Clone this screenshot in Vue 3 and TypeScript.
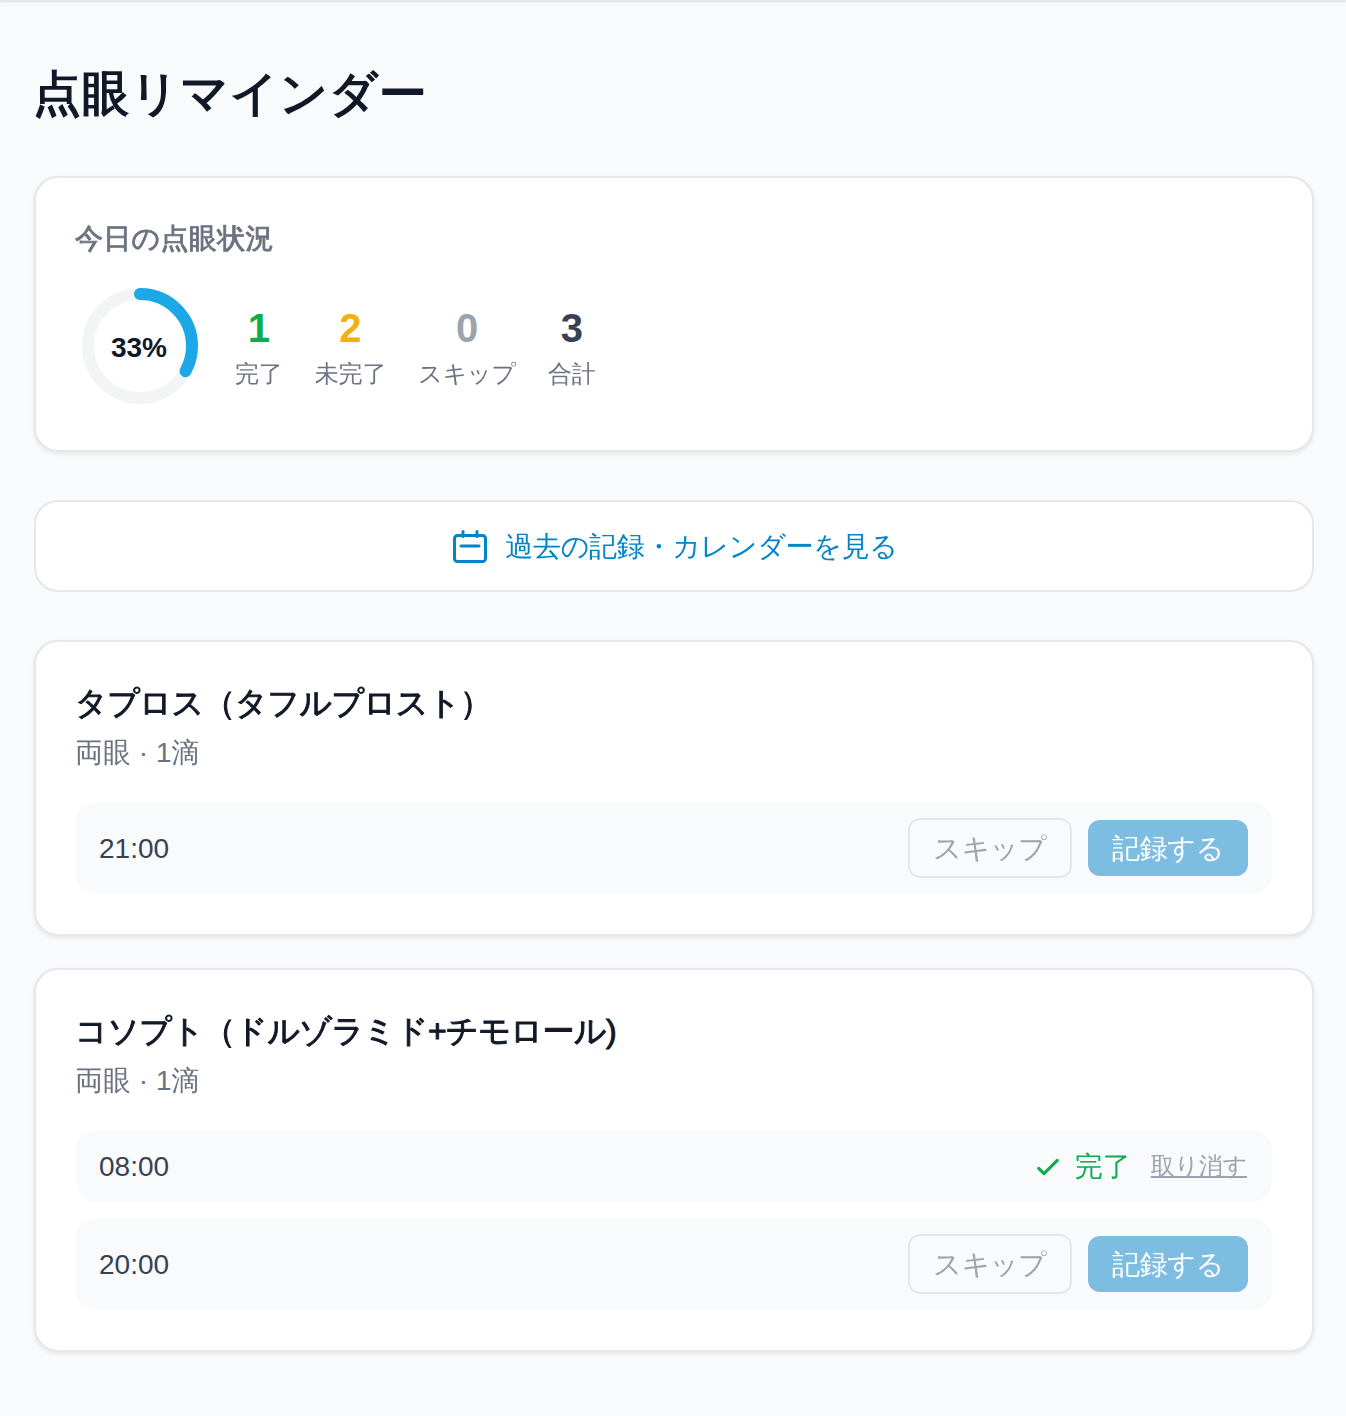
<script setup lang="ts">
interface Stat { value: number; label: string; color: string }
interface Slot { time: string; done: boolean }
interface Drug { name: string; detail: string; slots: Slot[] }

const stats: Stat[] = [
  { value: 1, label: '完了', color: '#10ac4c' },
  { value: 2, label: '未完了', color: '#f2b10f' },
  { value: 0, label: 'スキップ', color: '#9ca3af' },
  { value: 3, label: '合計', color: '#374151' },
]

const drugs: Drug[] = [
  { name: 'タプロス（タフルプロスト）', detail: '両眼 · 1滴', slots: [{ time: '21:00', done: false }] },
  {
    name: 'コソプト（ドルゾラミド+チモロール)',
    detail: '両眼 · 1滴',
    slots: [
      { time: '08:00', done: true },
      { time: '20:00', done: false },
    ],
  },
]

const radius = 52
const circumference = 2 * Math.PI * radius
const dash = `${circumference * 0.33} ${circumference}`
</script>

<template>
  <div class="page">
    <div class="topline"></div>
    <main class="content">
      <h1 class="title">点眼リマインダー</h1>

      <section class="card summary">
        <h2 class="summary-title">今日の点眼状況</h2>
        <div class="summary-body">
          <div class="ring">
            <svg viewBox="0 0 120 120" width="120" height="120">
              <circle cx="60" cy="60" :r="radius" fill="none" stroke="#f3f4f6" stroke-width="12" />
              <circle
                cx="60"
                cy="60"
                :r="radius"
                fill="none"
                stroke="#1ca7e6"
                stroke-width="12"
                stroke-linecap="round"
                :stroke-dasharray="dash"
                transform="rotate(-90 60 60)"
              />
            </svg>
            <span class="ring-label">33%</span>
          </div>
          <div class="stats">
            <div v-for="s in stats" :key="s.label" class="stat">
              <span class="stat-value" :style="{ color: s.color }">{{ s.value }}</span>
              <span class="stat-label">{{ s.label }}</span>
            </div>
          </div>
        </div>
      </section>

      <a class="history">
        <svg class="history-icon" viewBox="0 0 36 36" width="36" height="36" fill="none" stroke="currentColor" stroke-width="3" stroke-linecap="round" stroke-linejoin="round">
          <rect x="2.5" y="6.5" width="31" height="26" rx="3" />
          <path d="M11 2.5v5M25 2.5v5M9 17h18" />
        </svg>
        <span class="history-text">過去の記録・カレンダーを見る</span>
      </a>

      <section v-for="d in drugs" :key="d.name" class="card drug">
        <h3 class="drug-name">{{ d.name }}</h3>
        <p class="drug-detail">{{ d.detail }}</p>
        <div class="slots">
          <div v-for="s in d.slots" :key="s.time" class="slot">
            <span class="slot-time">{{ s.time }}</span>
            <div v-if="s.done" class="slot-actions slot-actions-done">
              <span class="done">
                <svg viewBox="0 0 24 24" width="32" height="32" fill="none" stroke="currentColor" stroke-width="2.3" stroke-linecap="round" stroke-linejoin="round">
                  <path d="M5 13l4 4L19 7" />
                </svg>
                完了
              </span>
              <span class="undo">取り消す</span>
            </div>
            <div v-else class="slot-actions">
              <button class="btn-skip" type="button">スキップ</button>
              <button class="btn-record" type="button">記録する</button>
            </div>
          </div>
        </div>
      </section>
    </main>
  </div>
</template>

<style>
html, body { margin: 0; background: #f9fafb; }
</style>

<style scoped>
.page {
  min-height: 1416px;
  background: #f9fafb;
  font-family: "Liberation Sans", "WenQuanYi Zen Hei", "Noto Sans CJK JP", sans-serif;
  color: #111827;
}
.topline { height: 2px; background: #e5e7eb; box-shadow: 0 1px 2px rgba(0, 0, 0, 0.05); }
.content {
  padding: 60px 32px 64px 34px;
  display: flex;
  flex-direction: column;
}
.title {
  margin: 0 0 48px -1px;
  font-size: 48px;
  line-height: 64px;
  padding-bottom: 2px;
  font-weight: 400;
  letter-spacing: 0.6px;
  -webkit-text-stroke: 1.5px #111827;
  color: #111827;
}
.card {
  background: #fff;
  border: 2px solid #e5e7eb;
  border-radius: 24px;
  box-shadow: 0 2px 4px rgba(0, 0, 0, 0.08);
  padding: 40px;
}
.summary { margin-bottom: 48px; padding-bottom: 44px; }
.summary-title {
  margin: 0 0 26px -1px;
  font-size: 28px;
  line-height: 42px;
  font-weight: 400;
  letter-spacing: 0.3px;
  -webkit-text-stroke: 0.9px #6b7280;
  color: #6b7280;
}
.summary-body { display: flex; align-items: center; gap: 35px; padding-left: 4px; }
.ring { position: relative; width: 120px; height: 120px; }
.ring svg { display: block; }
.ring-label {
  position: absolute;
  inset: 0;
  padding: 3px 2px 0 0;
  display: flex;
  align-items: center;
  justify-content: center;
  font-size: 28px;
  font-weight: 700;
}
.stats { display: flex; gap: 32px; }
.stat { display: flex; flex-direction: column; align-items: center; }
.stat-value { font-size: 40px; line-height: 56px; font-weight: 700; }
.stat-label { font-size: 24px; line-height: 36px; letter-spacing: -0.15px; color: #6b7280; }
.history {
  display: flex;
  align-items: center;
  justify-content: center;
  gap: 17px;
  height: 92px;
  box-sizing: border-box;
  margin-bottom: 48px;
  padding-left: 2px;
  background: #fff;
  border: 2px solid #e5e7eb;
  border-radius: 24px;
  font-size: 28px;
  color: #0284c7;
}
.history-icon { flex: none; margin-top: 2px; }
.history-text { padding-top: 2px; letter-spacing: -0.3px; }
.drug { padding-top: 39px; }
.drug + .drug { margin-top: 32px; }
.drug-name {
  margin: 0 0 0 -1px;
  font-size: 32px;
  line-height: 45px;
  font-weight: 400;
  letter-spacing: -0.6px;
  -webkit-text-stroke: 1px #111827;
}
.drug-detail {
  margin: 6px 0 28px -1px;
  font-size: 28px;
  line-height: 42px;
  color: #6b7280;
}
.slots { display: flex; flex-direction: column; gap: 16px; }
.slot {
  display: flex;
  align-items: center;
  justify-content: space-between;
  padding: 16px 24px 16px 23px;
  background: #f9fafb;
  border-radius: 20px;
}
.slot-time { font-size: 28px; padding-top: 2px; color: #374151; }
.slot-actions { display: flex; align-items: center; gap: 16px; }
.slot-actions-done { margin-right: 1px; }
.btn-skip, .btn-record {
  box-sizing: border-box;
  font-family: inherit;
  font-size: 28px;
  letter-spacing: -0.3px;
  padding: 2px 0 0;
  border-radius: 12px;
}
.btn-skip {
  width: 164px;
  height: 60px;
  background: transparent;
  border: 2px solid #e5e7eb;
  color: #9ca3af;
}
.btn-record {
  width: 160px;
  height: 56px;
  background: #7dbde2;
  border: none;
  color: #fff;
}
.done {
  display: flex;
  align-items: center;
  gap: 11px;
  font-size: 28px;
  line-height: 38px;
  padding-top: 2px;
  color: #10ac4c;
}
.done svg { flex: none; }
.undo {
  margin-left: 4px;
  font-size: 24px;
  line-height: 40px;
  letter-spacing: -0.2px;
  color: #9ca3af;
  text-decoration: underline;
}
</style>
